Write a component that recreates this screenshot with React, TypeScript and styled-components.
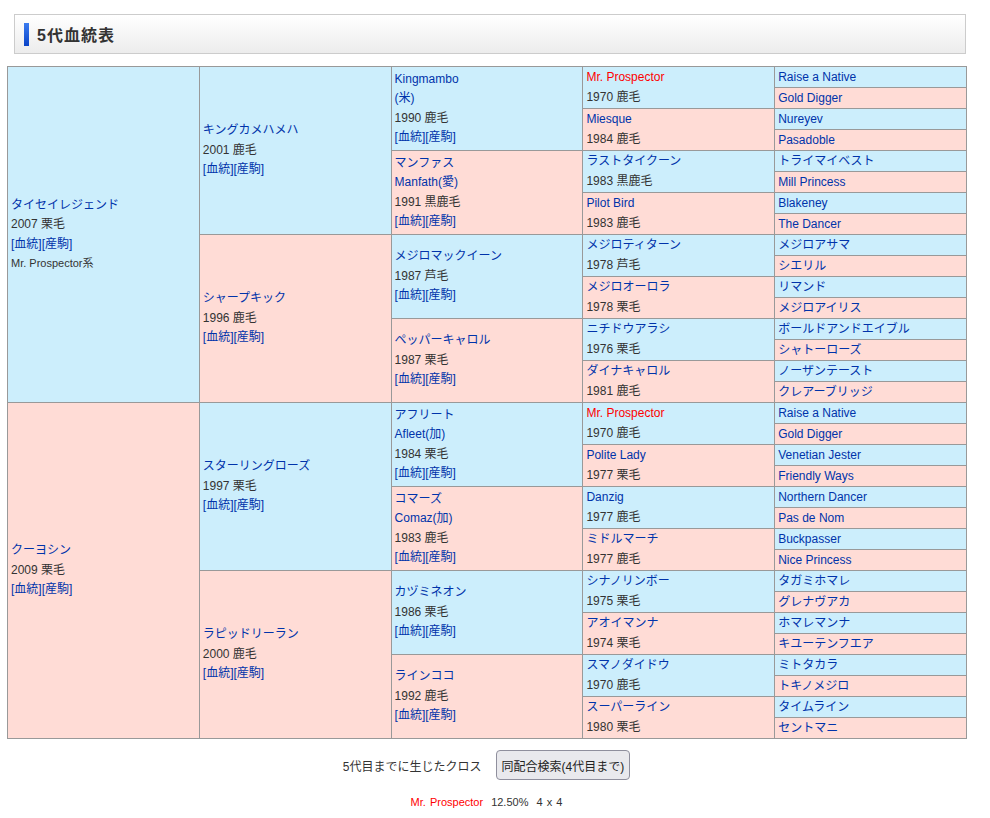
import { createGlobalStyle, styled } from "styled-components";

const Global = createGlobalStyle`
  body { margin: 0; background: #fff; font-family: "Liberation Sans", "Noto Sans CJK JP", sans-serif; font-size: 12px; color: #333; }
`;

const Page = styled.div`
  padding: 14px 24px 0 7px;
  width: 990px;
  box-sizing: border-box;
`;

const Heading = styled.h2`
  margin: 0 0 12px 7px;
  height: 40px;
  box-sizing: border-box;
  border: 1px solid #ccc;
  background: linear-gradient(#fff, #ececec);
  display: flex;
  align-items: center;
  gap: 8px;
  padding-left: 9px;
  font-size: 16px;
  font-weight: bold;
  color: #333;
  letter-spacing: 1px;
  &::before {
    content: "";
    width: 5px;
    height: 23px;
    background: linear-gradient(#3b7cf0, #0a44c8);
  }
`;

const Table = styled.table`
  border-collapse: collapse;
  width: 960px;
  table-layout: fixed;
  border: 1px solid #999;
`;

const Cell = styled.td<{ $female: boolean; $gen: number }>`
  background: ${(p) => (p.$female ? "#ffdcd6" : "#cceefc")};
  border: 1px solid #999;
  vertical-align: middle;
  padding: 0 3px;
  height: 20px;
  line-height: ${(p) => (p.$gen === 5 ? "20px" : "19.5px")};
  white-space: nowrap;
  overflow: hidden;
`;

const Name = styled.a<{ $red?: boolean }>`
  color: ${(p) => (p.$red ? "#ff0000" : "#0033aa")};
  text-decoration: none;
  display: block;
`;

const Link = styled.a`
  color: #0033aa;
  text-decoration: none;
`;

const Line = styled.div``;

const Small = styled.div`
  font-size: 11px;
`;

const Cross = styled.div`
  display: flex;
  justify-content: center;
  align-items: center;
  gap: 14px;
  margin-top: 11px;
  font-size: 12px;
`;

const Button = styled.button`
  font-family: inherit;
  font-size: 12px;
  color: #222;
  background: #e9e9ed;
  border: 1px solid #8f8f9d;
  border-radius: 4px;
  height: 30px;
  padding: 0 5px;
`;

const CrossResult = styled.div`
  text-align: center;
  margin-top: 16px;
  font-size: 11px;
  word-spacing: 1px;
  span { color: #ff0000; margin-right: 8px; }
`;

type Horse = { n: string[]; d?: string; red?: boolean; line?: string };

const gen1: Horse[] = [
  { n: ["タイセイレジェンド"], d: "2007 栗毛", line: "Mr. Prospector系" },
  { n: ["クーヨシン"], d: "2009 栗毛" },
];
const gen2: Horse[] = [
  { n: ["キングカメハメハ"], d: "2001 鹿毛" },
  { n: ["シャープキック"], d: "1996 鹿毛" },
  { n: ["スターリングローズ"], d: "1997 栗毛" },
  { n: ["ラピッドリーラン"], d: "2000 鹿毛" },
];
const gen3: Horse[] = [
  { n: ["Kingmambo", "(米)"], d: "1990 鹿毛" },
  { n: ["マンファス", "Manfath(愛)"], d: "1991 黒鹿毛" },
  { n: ["メジロマックイーン"], d: "1987 芦毛" },
  { n: ["ペッパーキャロル"], d: "1987 栗毛" },
  { n: ["アフリート", "Afleet(加)"], d: "1984 栗毛" },
  { n: ["コマーズ", "Comaz(加)"], d: "1983 鹿毛" },
  { n: ["カヅミネオン"], d: "1986 栗毛" },
  { n: ["ラインココ"], d: "1992 鹿毛" },
];
const gen4: Horse[] = [
  { n: ["Mr. Prospector"], d: "1970 鹿毛", red: true },
  { n: ["Miesque"], d: "1984 鹿毛" },
  { n: ["ラストタイクーン"], d: "1983 黒鹿毛" },
  { n: ["Pilot Bird"], d: "1983 鹿毛" },
  { n: ["メジロティターン"], d: "1978 芦毛" },
  { n: ["メジロオーロラ"], d: "1978 栗毛" },
  { n: ["ニチドウアラシ"], d: "1976 栗毛" },
  { n: ["ダイナキャロル"], d: "1981 鹿毛" },
  { n: ["Mr. Prospector"], d: "1970 鹿毛", red: true },
  { n: ["Polite Lady"], d: "1977 栗毛" },
  { n: ["Danzig"], d: "1977 鹿毛" },
  { n: ["ミドルマーチ"], d: "1977 鹿毛" },
  { n: ["シナノリンボー"], d: "1975 栗毛" },
  { n: ["アオイマンナ"], d: "1974 栗毛" },
  { n: ["スマノダイドウ"], d: "1970 鹿毛" },
  { n: ["スーパーライン"], d: "1980 栗毛" },
];
const gen5: Horse[] = [
  "Raise a Native", "Gold Digger", "Nureyev", "Pasadoble", "トライマイベスト", "Mill Princess",
  "Blakeney", "The Dancer", "メジロアサマ", "シエリル", "リマンド", "メジロアイリス",
  "ボールドアンドエイブル", "シャトーローズ", "ノーザンテースト", "クレアーブリッジ",
  "Raise a Native", "Gold Digger", "Venetian Jester", "Friendly Ways", "Northern Dancer",
  "Pas de Nom", "Buckpasser", "Nice Princess", "タガミホマレ", "グレナヴアカ", "ホマレマンナ",
  "キユーテンフエア", "ミトタカラ", "トキノメジロ", "タイムライン", "セントマニ",
].map((n) => ({ n: [n] }));

const gens = [gen1, gen2, gen3, gen4, gen5];

function HorseCell({ h, gen, idx }: { h: Horse; gen: number; idx: number }) {
  const span = 32 >> gen;
  return (
    <Cell rowSpan={span} $female={idx % 2 === 1} $gen={gen}>
      {h.n.map((x, i) => (
        <Name key={i} href="#" $red={h.red}>{x}</Name>
      ))}
      {h.d && <Line>{h.d}</Line>}
      {gen <= 3 && (
        <Line>
          <Link href="#">[血統]</Link>
          <Link href="#">[産駒]</Link>
        </Line>
      )}
      {h.line && <Small>{h.line}</Small>}
    </Cell>
  );
}

export default function App() {
  const rows = Array.from({ length: 32 }, (_, r) => (
    <tr key={r}>
      {gens.map((list, g) => {
        const gen = g + 1;
        const span = 32 >> gen;
        if (r % span !== 0) return null;
        const idx = r / span;
        return <HorseCell key={g} h={list[idx]} gen={gen} idx={idx} />;
      })}
    </tr>
  ));
  return (
    <Page>
      <Global />
      <Heading>5代血統表</Heading>
      <Table>
        <tbody>{rows}</tbody>
      </Table>
      <Cross>
        5代目までに生じたクロス
        <Button>同配合検索(4代目まで)</Button>
      </Cross>
      <CrossResult>
        <span>Mr. Prospector</span>12.50%&nbsp; 4 x 4
      </CrossResult>
    </Page>
  );
}
